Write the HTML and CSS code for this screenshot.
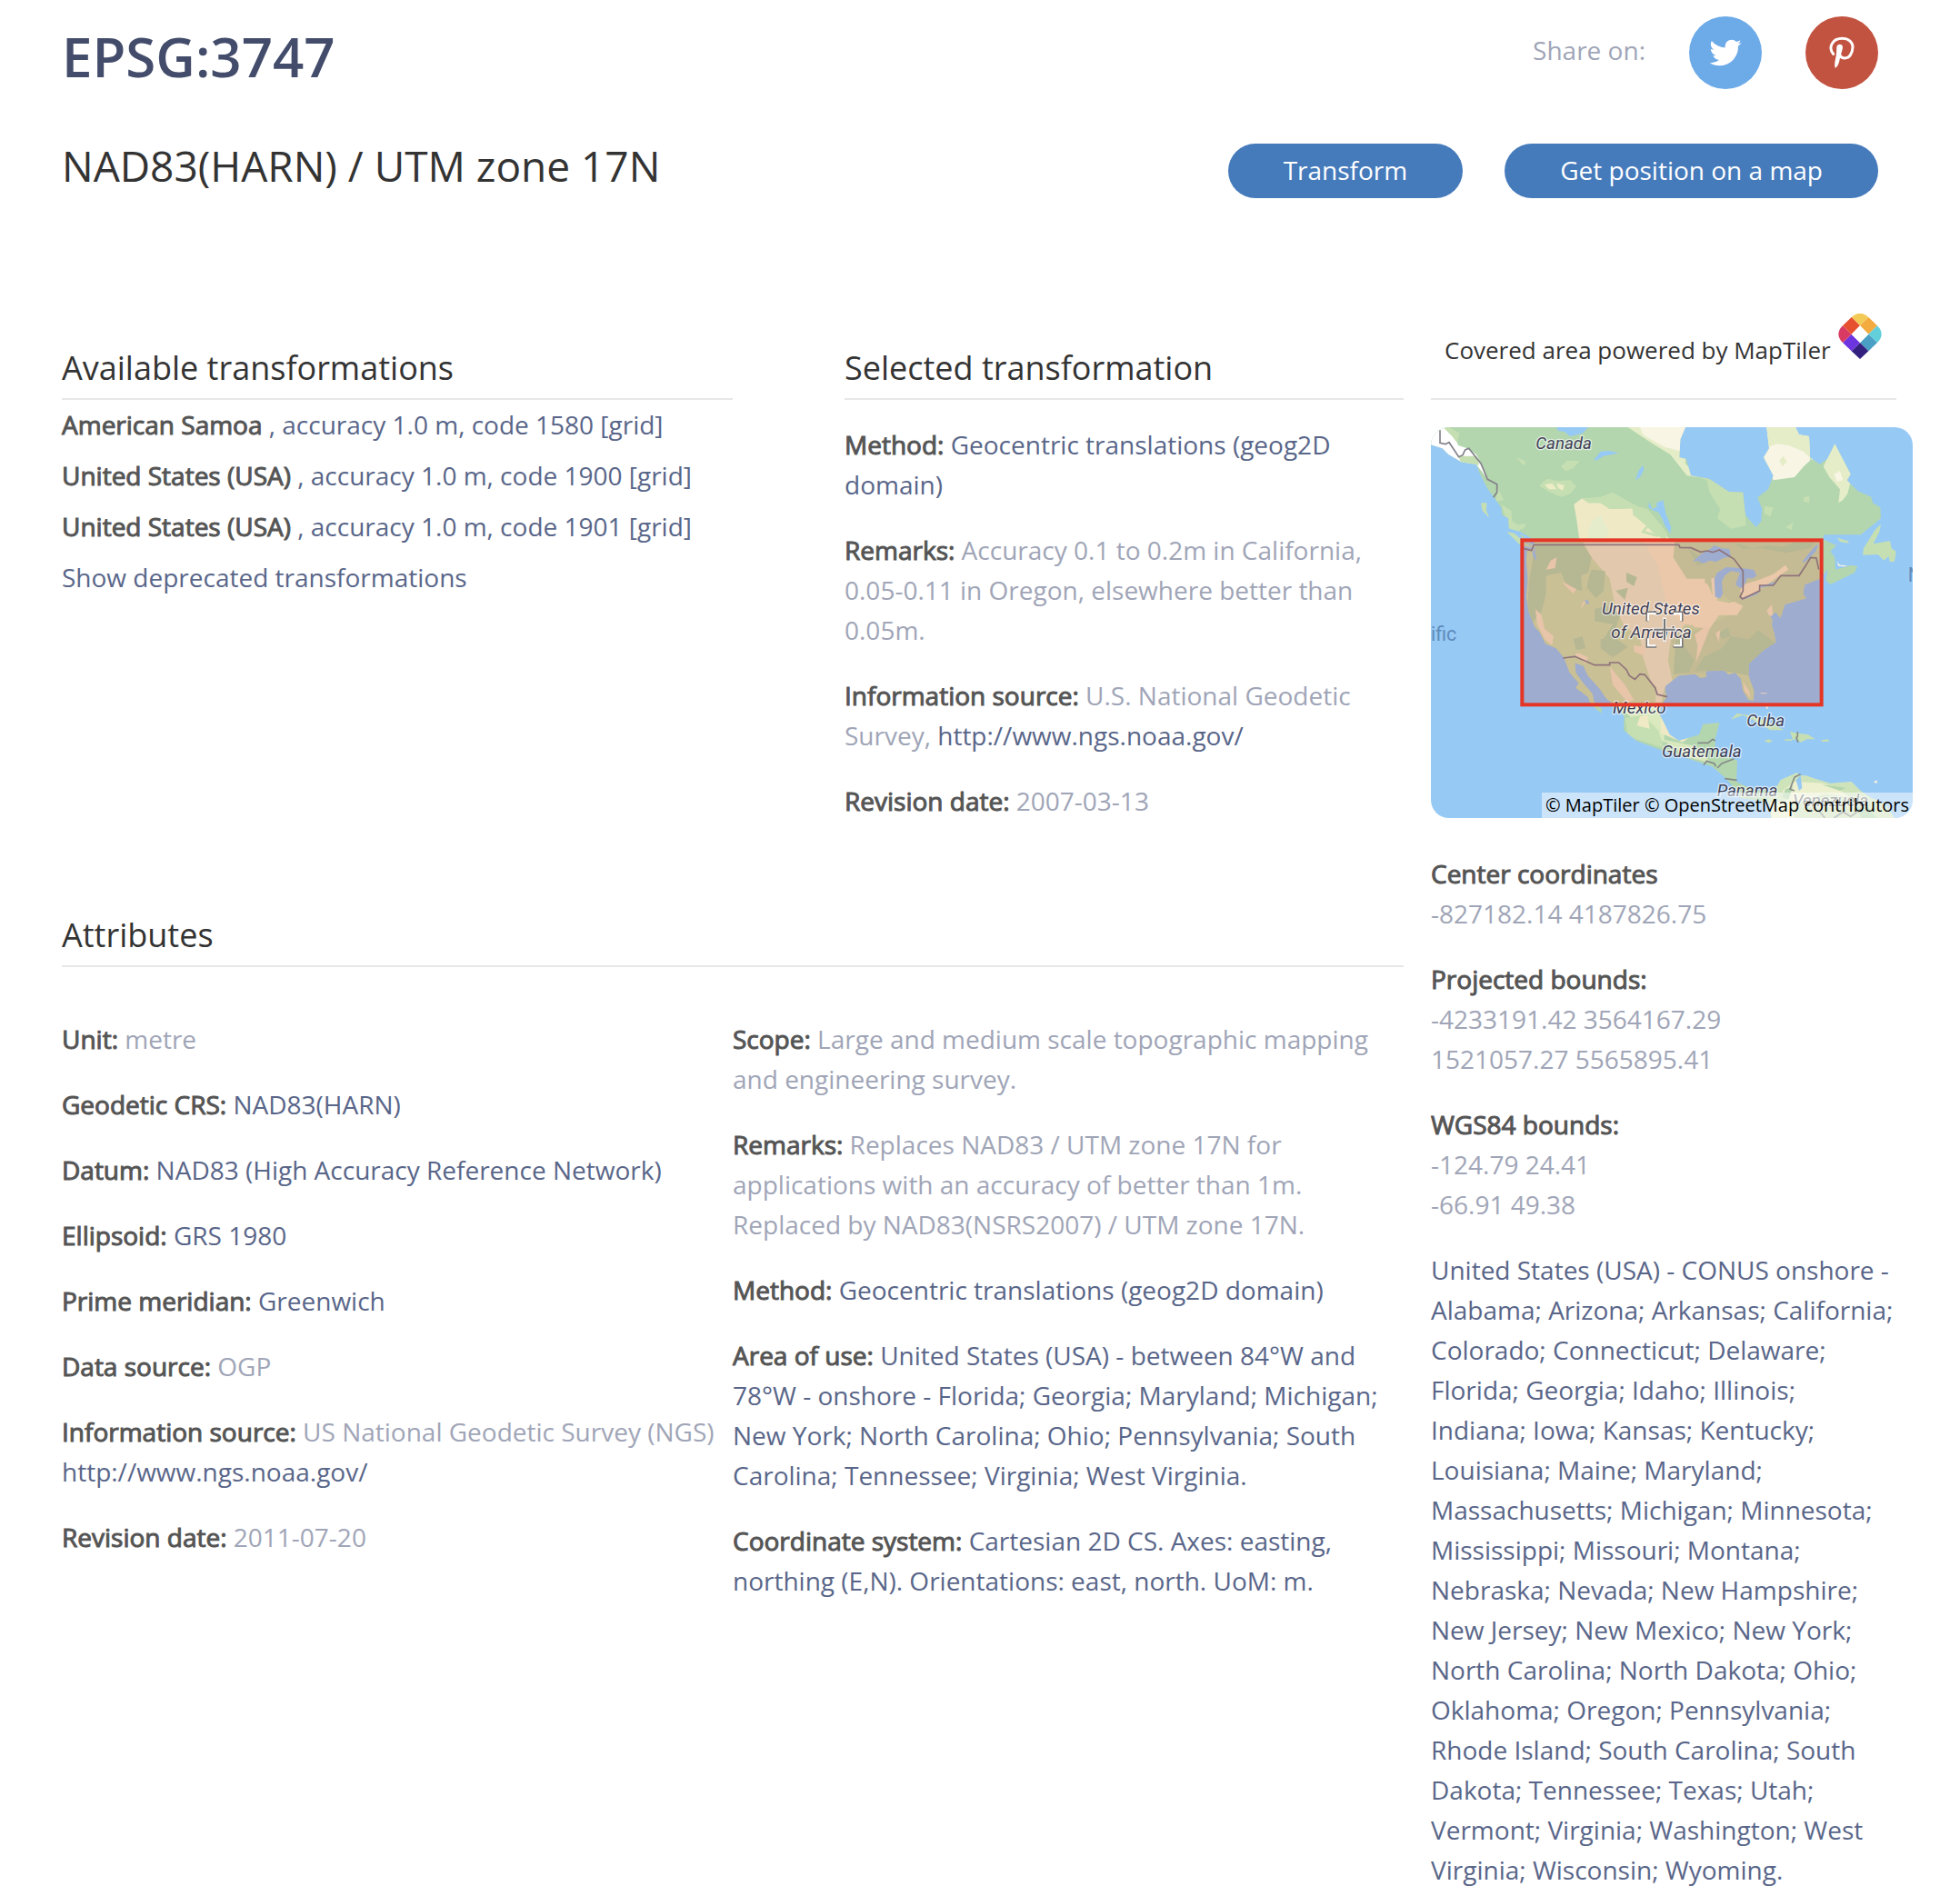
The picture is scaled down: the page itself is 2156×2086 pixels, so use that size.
FILE: index.html
```html
<!DOCTYPE html>
<html lang="en">
<head>
<meta charset="utf-8">
<meta name="viewport" content="width=device-width, initial-scale=1">
<title>EPSG:3747 - NAD83(HARN) / UTM zone 17N</title>
<link rel="stylesheet" href="styles.css">
</head>
<body>
<div class="page">
  <header>
    <div class="title-row">
      <h1>EPSG:3747</h1>
      <div class="share">
        <span class="share-label">Share on:</span>
        <a class="social twitter" href="#twitter" aria-label="Twitter">
          <svg viewBox="0 0 1792 1792" width="40" height="40" fill="#fff"><path d="M1684 408q-67 98-162 167 1 14 1 42 0 130-38 259.5t-115.500 248.500-184.500 210.500-258 146-323 54.500q-271 0-496-145 35 4 78 4 225 0 401-138-105-2-188-64.500t-114-159.500q33 5 61 5 43 0 85-11-112-23-185.500-111.500t-73.500-205.500v-4q68 38 146 41-66-44-105-115t-39-154q0-88 44-163 121 149 294.500 238.500t371.500 99.500q-8-38-8-74 0-134 94.500-228.500t228.500-94.500q140 0 236 102 109-21 205-78-37 115-142 178 93-10 186-50z"/></svg>
        </a>
        <a class="social pinterest" href="#pinterest" aria-label="Pinterest">
          <svg viewBox="498 54 240 240" width="80" height="80"><path d="M590 178C580 168 580 153 586 144C593 131 606 127 620 127C641 127 654 139 654 156C653 178 642 192 628 192C620 192 614 188 612 182" fill="none" stroke="#fff" stroke-width="9" stroke-linecap="round"/><path d="M601 156C602 143 621 143 621 156C620 168 614 180 611 196C609 209 604 221 596 225C593 215 595 203 598 190C601 178 600 168 601 156Z" fill="#fff"/></svg>
        </a>
      </div>
    </div>
    <div class="name-row">
      <h2>NAD83(HARN) / UTM zone 17N</h2>
      <div class="actions">
        <a class="btn" href="#transform">Transform</a>
        <a class="btn" href="#map">Get position on a map</a>
      </div>
    </div>
  </header>

  <div class="layout">
    <main>
      <div class="transformations">
        <section class="available">
          <h3>Available transformations</h3>
          <ul>
            <li><a href="#1580"><b>American Samoa</b> , accuracy 1.0 m, code 1580 [grid]</a></li>
            <li><a href="#1900"><b>United States (USA)</b> , accuracy 1.0 m, code 1900 [grid]</a></li>
            <li><a href="#1901"><b>United States (USA)</b> , accuracy 1.0 m, code 1901 [grid]</a></li>
            <li><a href="#deprecated">Show deprecated transformations</a></li>
          </ul>
        </section>
        <section class="selected">
          <h3>Selected transformation</h3>
          <p><b>Method:</b> <a href="#method">Geocentric translations (geog2D domain)</a></p>
          <p><b>Remarks:</b> Accuracy 0.1 to 0.2m in California, 0.05-0.11 in Oregon, elsewhere better than 0.05m.</p>
          <p><b>Information source:</b> U.S. National Geodetic Survey, <a href="http://www.ngs.noaa.gov/">http://www.ngs.noaa.gov/</a></p>
          <p><b>Revision date:</b> 2007-03-13</p>
        </section>
      </div>
      <section class="attributes">
        <h3>Attributes</h3>
        <div class="attribute-columns">
          <div>
            <p><b>Unit:</b> metre</p>
            <p><b>Geodetic CRS:</b> <a href="#crs">NAD83(HARN)</a></p>
            <p><b>Datum:</b> <a href="#datum">NAD83 (High Accuracy Reference Network)</a></p>
            <p><b>Ellipsoid:</b> <a href="#ellipsoid">GRS 1980</a></p>
            <p><b>Prime meridian:</b> <a href="#meridian">Greenwich</a></p>
            <p><b>Data source:</b> OGP</p>
            <p><b>Information source:</b> US National Geodetic Survey (NGS) <a href="http://www.ngs.noaa.gov/">http://www.ngs.noaa.gov/</a></p>
            <p><b>Revision date:</b> 2011-07-20</p>
          </div>
          <div>
            <p><b>Scope:</b> Large and medium scale topographic mapping and engineering survey.</p>
            <p><b>Remarks:</b> Replaces NAD83 / UTM zone 17N for applications with an accuracy of better than 1m. Replaced by NAD83(NSRS2007) / UTM zone 17N.</p>
            <p><b>Method:</b> <a href="#method">Geocentric translations (geog2D domain)</a></p>
            <p><b>Area of use:</b> <a href="#area">United States (USA) - between 84°W and 78°W - onshore - Florida; Georgia; Maryland; Michigan; New York; North Carolina; Ohio; Pennsylvania; South Carolina; Tennessee; Virginia; West Virginia.</a></p>
            <p><b>Coordinate system:</b> <a href="#cs">Cartesian 2D CS. Axes: easting, northing (E,N). Orientations: east, north. UoM: m.</a></p>
          </div>
        </div>
      </section>
    </main>

    <aside>
      <div class="powered">
        <div>Covered area powered by MapTiler
          <svg class="logo" viewBox="0 0 144 150" width="48" height="50" role="img" aria-label="MapTiler logo">
            <path d="M44 12Q72-14 100 12L72 40Z" fill="#f3ca55"/>
            <path d="M100 12L129 40L100 68L72 40Z" fill="#f3aa3e"/>
            <path d="M129 40Q157 68 129 96L100 68Z" fill="#62cfdb"/>
            <path d="M100 68L129 96L100 124L72 96Z" fill="#4a9fc4"/>
            <path d="M72 96L100 124L72 150L44 124Z" fill="#34207f"/>
            <path d="M44 68L72 96L44 124L15 96Z" fill="#6c35e0"/>
            <path d="M15 40Q-13 68 15 96L44 68Z" fill="#d93a63"/>
            <path d="M44 12L72 40L44 68L15 40Z" fill="#e6502f"/>
            <path d="M72 40L100 68L72 96L44 68Z" fill="#fff"/>
          </svg>
        </div>
      </div>
      <a class="map" href="#map" aria-label="Map of the covered area">
        <svg viewBox="0 0 1590 1290" preserveAspectRatio="xMidYMid slice">
          <defs>
            <path id="land" d="M0 0V58L38 70L58 90L100 115L150 123L160 150L185 200L210 235L232 265L235 290L255 300L258 335L290 345L303 370L345 400L348 435L340 400L318 405L315 440L320 500L315 560L323 610L343 660L358 675L378 715L413 730L438 760L458 810L488 845L478 860L518 890L528 915L563 945L563 930L538 905L533 880L503 845L478 810L475 778L503 788L518 820L558 865L578 895L603 915L638 955L636 1000L678 1035L758 1065L828 1085L868 1100L928 1120L963 1150L983 1170L1008 1200L1020 1225L1105 1235L1120 1215L1110 1195L1070 1200L1008 1170L1011 1100L960 1080L938 1060L938 1030L951 980L953 975L898 980L885 1015L818 1035L788 1015L770 978L755 950L758 920L778 890L773 870L773 855L818 820L873 815L888 827L908 825L908 805L968 803L983 817L1003 810L1023 830L1030 870L1048 900L1065 902L1066 870L1048 820L1050 780L1098 735L1138 710L1133 680L1125 655L1126 635L1120 625L1138 610L1153 630L1168 585L1238 565L1228 550L1233 520L1283 500L1310 470L1303 505L1318 519L1398 480L1408 460L1388 455L1335 470L1333 430L1318 410L1338 390L1293 370L1298 355L1418 355L1468 315L1485 300L1483 265L1458 250L1453 230L1408 210L1373 175L1385 155L1333 55L1308 105L1283 122L1251 100L1248 30L1215 25L1203 0H1108L1116 70L1098 100L1130 160L1113 205L1078 232L1093 270L1090 310L1073 330L1038 290L1030 215L983 213L918 170L858 160L843 105L820 100L823 40L840 0Z"/>
            <path id="south" d="M1105 1235L1120 1215L1148 1175L1153 1165L1208 1140L1218 1150L1238 1150L1268 1160L1318 1175L1388 1170L1418 1200L1448 1220L1500 1245L1530 1290H1123L1118 1250Z"/>
            <clipPath id="coast"><use href="#land"/></clipPath>
            <clipPath id="usa"><rect x="301" y="373" width="988" height="543"/></clipPath>
          </defs>
          <rect width="1590" height="1290" fill="#97c9f5"/>
          <use href="#land" fill="#b3d6ae"/>
          <use href="#south" fill="#cfe3bb"/>
          <g clip-path="url(#coast)">
            <path d="M0 0H50L75 20L90 60L120 70L150 90L175 140L190 175L150 123L100 115L0 58Z" fill="#fff"/>
            <path d="M60 0L95 20L85 50L70 30L40 0ZM90 95L150 95L160 125L100 118ZM220 200L240 240L215 245Z" fill="#c6dfb2"/>
            <path d="M650 0L680 20L740 60L790 90L845 160L880 165L840 120L840 0Z" fill="#e5edc8"/>
            <path d="M690 0L700 25L770 65L830 80L840 0Z" fill="#f8f5e4"/>
            <path d="M858 155L910 175L920 215L955 270L945 300L990 335L1040 325L1038 290L1030 215L918 170Z" fill="#c6dfb2"/>
            <path d="M1098 0H1260L1251 110L1230 130L1200 165L1130 175L1095 100Z" fill="#f8f5e4"/>
            <path d="M1105 0H1260V110L1230 80L1180 60L1140 55L1115 65ZM1150 110L1163 95L1175 115L1160 130Z" fill="#e5edc8"/>
            <path d="M1333 50L1295 130L1315 165L1350 205L1345 250L1360 240L1375 220L1390 160Z" fill="#e5edc8"/>
            <path d="M1330 155L1350 145L1360 175L1340 180Z" fill="#f8f5e4"/>
            <path d="M370 180L385 170L420 178L460 175L480 195L460 220L430 230L395 215L358 195ZM430 130L450 110L490 112L470 135L445 145ZM280 100L310 110L312 125L300 120ZM232 255L265 275L268 310L300 330L290 345L258 335ZM290 320L315 320L300 340ZM1230 230L1250 228L1248 250L1230 245ZM1100 260L1130 265L1120 295L1100 285ZM1170 330L1195 315L1190 340Z" fill="#c6dfb2"/>
            <path d="M375 190L400 185L415 205L390 205ZM415 185L440 192L435 210L420 200Z" fill="#eeecc6"/>
            <path d="M472 255L498 235L520 250L560 250L590 270L665 268L668 290L750 335L790 370H490L480 300Z" fill="#f0e9c6"/>
            <path d="M520 340L530 310L560 290L590 350L565 370H520Z" fill="#e4eccb"/>
            <path d="M500 235L560 230L600 215L680 260L715 270L740 300L780 350L775 375L735 350L705 320L668 290L665 268L590 270L560 250L520 250Z" fill="#c6dfb2"/>
            <path d="M700 345L720 320L745 335L745 358ZM755 320L768 350" fill="none" stroke="#c6dfb2" stroke-width="8"/>
            <g clip-path="url(#usa)">
              <rect x="300" y="373" width="990" height="550" fill="#cce1ad"/>
              <path d="M500 373H810L800 450L850 520L880 570L930 590L910 640L840 650L790 710L770 870L730 850L700 760L690 690L640 660L610 600L590 500L530 430Z" fill="#ececc8"/>
              <path d="M700 373H805L800 430L845 500L910 510L935 570L1030 590L1010 615L950 620L920 660L830 650L780 590L750 460Z" fill="#f7ebc5"/>
              <path d="M805 373H1289V720L1040 800L840 815L790 700L900 660L1030 600L900 510L845 500L800 430Z" fill="#c6dbaa"/>
              <path d="M845 500L905 500L890 590L930 600L1000 575L1030 590L1010 620L950 620L920 665L870 660L820 600Z" fill="#f7ebc5"/>
              <path d="M345 385H500L530 430L520 480L495 490L500 540L450 530L430 480L380 490L380 550L365 610L330 650L318 600L325 500Z" fill="#b5d6a9"/>
              <path d="M530 470L575 475L570 540L545 565L515 530L520 500ZM540 600L580 590L625 620L600 690L570 700L600 650L540 640ZM645 480L680 495L670 525L645 510ZM560 700L600 690L650 725L600 760L560 730ZM810 690L835 720L870 770L850 810L800 815L805 750ZM470 700L500 690L510 730L480 735ZM610 540L650 530L640 570Z" fill="#b5d6a9"/>
              <path d="M870 805L900 760L960 730L990 690L1050 700L1080 670L1120 700L1140 715L1050 780L1050 820L1000 810L960 803ZM1000 380L1060 400L1110 390L1160 395L1200 380L1270 380L1250 400L1170 415L1090 400L1030 402ZM850 400L890 430L930 430L880 460ZM950 680L980 660L990 690L960 700Z" fill="#b5d6a9"/>
              <path d="M1030 520L1080 505L1130 485L1170 455L1180 470L1150 490L1110 520L1030 570L1020 540ZM925 500L955 490L940 600L930 560Z" fill="#f7ebc5"/>
              <path d="M345 600L365 620L375 665L405 690L400 720L375 700L350 650ZM395 440L415 430L410 465L380 470ZM435 510L480 535L470 550L440 520ZM870 685L910 655L920 665L890 740L875 775L880 720ZM670 720L710 725L705 755L670 740ZM940 680L955 670L950 710ZM500 580L515 570L495 600ZM475 750L510 780L520 760L485 745ZM590 790L640 850L670 900L650 910L600 850ZM1030 840L1050 870L1055 895L1035 870ZM1108 605L1125 585L1130 630L1115 620Z" fill="#f3e6c4"/>
              <path d="M750 800L780 760L800 850L770 860L760 910H740Z" fill="#ececc8"/>
            </g>
            <path d="M585 916H770V1040L720 1010L640 940Z" fill="#dbe9be"/>
            <path d="M640 960L700 950L750 1000L770 1060L650 1020Z" fill="#c6dfb2"/>
            <path d="M690 955L715 950L722 995L680 985ZM756 930L770 975L800 1015L850 1025L830 1040L760 1010Z" fill="#f0e9c6"/>
            <path d="M760 1030L860 1050L930 1110L850 1090Z" fill="#d9e8be"/>
          </g>
          <g fill="#c6dfb2">
            <path d="M250 345L275 350L300 372L340 400L296 390ZM165 250L184 250L183 275L193 300L170 275ZM1485 320L1465 340L1428 400L1425 422L1475 420L1495 440L1510 425L1515 445L1530 443L1535 410L1520 400L1515 375L1460 385L1480 345ZM1340 365L1375 375L1380 383L1350 378Z"/>
            <path d="M990 965L1010 945L1045 950L1100 965L1165 1000L1120 1000L1080 975L1030 950ZM1100 1035L1115 1030L1128 1036L1115 1042ZM1185 1005L1210 1010L1245 1015L1268 1030L1240 1030L1220 1040L1205 1030L1195 1033ZM1288 1033L1310 1030L1315 1037L1292 1038ZM1168 1030H1192V1035H1168Z"/>
          </g>
          <path d="M1340 443L1350 455L1375 457L1365 460L1345 458ZM1108 905L1112 930L1106 928ZM1088 877H1108V880H1088ZM1460 1172L1472 1165V1175Z" fill="#fbf5dc"/>
          <path d="M1200 1170L1290 1175L1340 1190L1380 1220L1300 1210L1240 1230L1180 1240L1160 1200ZM1120 1240L1180 1230L1200 1290H1125Z" fill="#edf0cf"/>
          <path d="M1170 1195L1195 1185L1180 1230L1160 1220ZM1290 1180L1370 1190L1350 1200ZM1390 1230L1430 1235L1470 1290H1420Z" fill="#b3d6ae"/>
          <g fill="#97c9f5">
            <path d="M415 0H520L500 20L460 30L440 15L420 12ZM538 108L560 80L590 78L620 85L570 95L545 110ZM675 175L685 145L700 125L703 140L690 165ZM718 265L720 245L730 270L745 265L745 250L766 240L775 285L793 330L790 350L775 330L762 300L750 280L735 275ZM260 335L295 345L345 375L335 390L300 355L260 345ZM338 400L348 430L345 440L335 420ZM1205 1165L1220 1150L1225 1190L1215 1200Z"/>
            <path d="M863 445L890 420L925 400L935 390L960 400L985 402L990 430L970 430L940 445L920 440L900 450L880 440ZM935 500L945 480L975 462L1025 465L1065 470L1075 490L1060 500L1045 497L1030 530L1020 530L1005 520L1020 480L990 475L970 490L960 510L963 550L955 565L938 560ZM1022 565L1080 545L1090 540L1075 552L1035 568ZM1085 525L1140 510L1130 520L1090 530ZM1225 445L1265 395L1280 385L1270 410L1235 445ZM508 570L520 572L520 585L512 582Z"/>
          </g>
          <g fill="none" stroke="#83818a" stroke-width="5">
            <path d="M30 10V52L48 56L60 50L92 98L105 92L113 75L125 70L165 120L187 172L218 188V215L206 232"/>
            <path d="M305 400L332 407L340 388H818L822 397L858 398L890 412L912 408L930 413L952 405L1000 435L1030 475L1030 540L1020 560L1028 567L1085 540V522H1130L1155 490H1215L1235 460L1253 430L1272 432L1280 470"/>
            <path d="M436 762L475 757L540 785H590V777H620L645 800L655 820L673 832L690 815L706 817L740 860L747 882L780 890"/>
            <path d="M880 1042H915L930 1030L938 1035M900 1115L910 1102L935 1110L940 1120M945 1125L960 1110L985 1100L1000 1095M970 1160L1010 1165M1210 1005V1020L1206 1025L1212 1040M1220 1145L1200 1155L1185 1195L1200 1200M1280 1265L1300 1290M1330 1290L1360 1270L1385 1285L1420 1260" stroke="#858a88"/>
          </g>
          <rect x="301" y="373" width="988" height="543" fill="#be3c3c" fill-opacity=".2"/>
          <g class="labels">
            <text x="346" y="71">Canada</text>
            <text x="564" y="617">United States</text>
            <text x="595" y="696">of America</text>
            <text x="600" y="944">Mexico</text>
            <text x="1042" y="987">Cuba</text>
            <text x="762" y="1090">Guatemala</text>
            <text x="944" y="1218">Panama</text>
            <text x="1194" y="1250" opacity=".75">Venezuela</text>
          </g>
          <g class="ocean-labels">
            <text x="0" y="704">ific</text>
            <text x="1574" y="510">N</text>
          </g>
          <rect x="301" y="373" width="988" height="543" fill="none" stroke="#e53524" stroke-width="12"/>
          <g fill="none" stroke-linecap="square">
            <path d="M714 636V612H740M804 612H828V636M828 700V724H804M740 724H714V700" stroke="#777" stroke-width="9"/>
            <path d="M717 636V615H740M804 615H825V636M825 700V721H804M740 721H717V700" stroke="#fff" stroke-width="6"/>
            <path d="M771 634V702M737 668H805" stroke="#eee" stroke-width="12"/>
            <path d="M771 636V700M739 668H803" stroke="#777" stroke-width="6"/>
          </g>
        </svg>
        <span class="attribution">© MapTiler © OpenStreetMap contributors</span>
      </a>
      <p><b>Center coordinates</b><br>-827182.14 4187826.75</p>
      <p><b>Projected bounds:</b><br>-4233191.42 3564167.29<br>1521057.27 5565895.41</p>
      <p><b>WGS84 bounds:</b><br>-124.79 24.41<br>-66.91 49.38</p>
      <p><a href="#conus">United States (USA) - CONUS onshore - Alabama; Arizona; Arkansas; California; Colorado; Connecticut; Delaware; Florida; Georgia; Idaho; Illinois; Indiana; Iowa; Kansas; Kentucky; Louisiana; Maine; Maryland; Massachusetts; Michigan; Minnesota; Mississippi; Missouri; Montana; Nebraska; Nevada; New Hampshire; New Jersey; New Mexico; New York; North Carolina; North Dakota; Ohio; Oklahoma; Oregon; Pennsylvania; Rhode Island; South Carolina; South Dakota; Tennessee; Texas; Utah; Vermont; Virginia; Washington; West Virginia; Wisconsin; Wyoming.</a></p>
    </aside>
  </div>
</div>
</body>
</html>
```

FILE: styles.css
```css
* {
  box-sizing: border-box;
}

body {
  margin: 0;
  background: #fff;
  color: #a0a5b7;
  font-family: "Open Sans", "Noto Sans", sans-serif;
  font-size: 28px;
  line-height: 44px;
}

h1, h2, h3, p, ul {
  margin: 0;
  padding: 0;
}

a {
  color: #596689;
  text-decoration: none;
}

b {
  color: #555;
  font-weight: 400;
  -webkit-text-stroke: 1px #555;
}

p + p {
  margin-top: 28px;
}

.page {
  padding: 18px 70px 0 68px;
}

.title-row,
.name-row {
  display: flex;
  justify-content: space-between;
  align-items: flex-start;
  padding-right: 20px;
}

.name-row {
  margin-top: 52px;
}

h1 {
  color: #434d6b;
  font-size: 60px;
  font-weight: 600;
  line-height: 88px;
}

h2 {
  color: #333;
  font-size: 46px;
  font-weight: 400;
  line-height: 48px;
}

.share {
  display: flex;
  align-items: center;
}

.share-label {
  margin-bottom: 6px;
}

.social {
  display: flex;
  align-items: center;
  justify-content: center;
  width: 80px;
  height: 80px;
  margin-left: 48px;
  border-radius: 50%;
}

.twitter {
  background: #6caae8;
}

.pinterest {
  background: #c25340;
}

.actions {
  display: flex;
  gap: 46px;
}

.btn {
  padding: 0 61px 2px;
  border-radius: 30px;
  background: #457abb;
  color: #fff;
  line-height: 58px;
}

.layout {
  display: grid;
  grid-template-columns: minmax(0, 1fr) 512px;
  gap: 30px;
  margin-top: 122px;
}

h3,
.powered {
  display: flex;
  align-items: flex-end;
  min-height: 100px;
  border-bottom: 2px solid #e7e7e7;
  color: #333;
}

h3 {
  padding-bottom: 13px;
  font-size: 36px;
  font-weight: 400;
  line-height: 40px;
}

.transformations {
  display: grid;
  grid-template-columns: repeat(12, minmax(0, 1fr));
}

.available {
  grid-column: 1 / 7;
}

.available ul {
  list-style: none;
}

.available li {
  padding: 5px 0 7px;
}

.selected {
  grid-column: 8 / 13;
}

.selected h3 {
  margin-bottom: 27px;
}

.attributes {
  margin-top: 61px;
}

.attribute-columns {
  display: grid;
  grid-template-columns: repeat(2, minmax(0, 1fr));
  padding-top: 57px;
}

.attribute-columns > div {
  padding-right: 16px;
}

.powered {
  padding: 0 0 33px 15px;
  font-size: 26px;
  line-height: 40px;
  white-space: nowrap;
}

.powered > div {
  height: 60px;
  display: flex;
  align-items: baseline;
  gap: 8px;
}

.map {
  position: relative;
  display: block;
  height: 430px;
  margin: 30px -18px 39px 0;
  border-radius: 20px;
  overflow: hidden;
}

.map svg {
  display: block;
  width: 100%;
  height: 100%;
}

.labels {
  fill: #3f4056;
  stroke: #fff;
  stroke-opacity: 0.6;
  stroke-width: 8px;
  stroke-linejoin: round;
  paint-order: stroke;
  font: italic 56px Roboto, sans-serif;
}

.ocean-labels {
  fill: #5f8bbb;
  font: 64px Roboto, sans-serif;
}

.attribution {
  position: absolute;
  right: 0;
  bottom: 0;
  padding: 0 4px;
  background: rgba(255, 255, 255, 0.5);
  color: #000;
  font-size: 20px;
  line-height: 28px;
  white-space: nowrap;
}
```
